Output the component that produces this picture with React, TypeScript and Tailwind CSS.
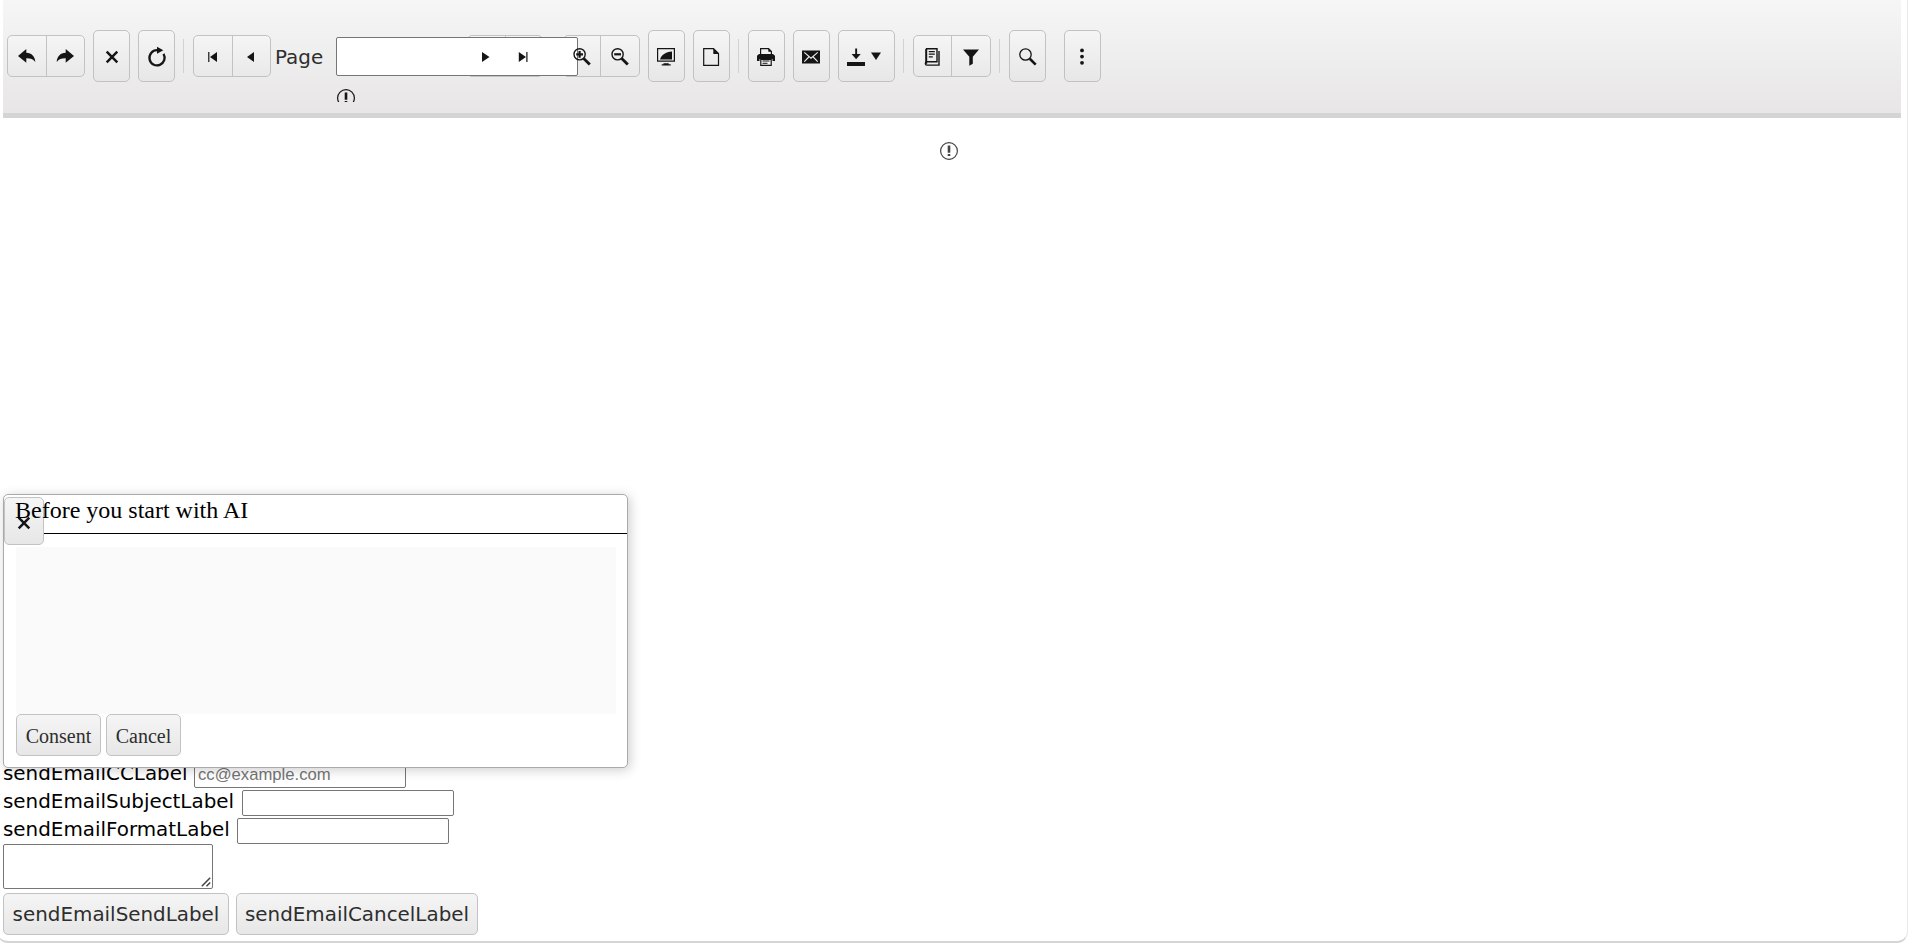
import React from "react";

const btn = "flex shrink-0 items-center justify-center rounded-[5px] border border-[#c2c2c2] bg-linear-to-b from-[#f5f5f5] to-[#e7e7e7] text-[#151515]";
const tall = "h-[52px] w-[37px]";
const group = "flex h-[42px] shrink-0 rounded-[5px] border border-[#c2c2c2] bg-linear-to-b from-[#f5f5f5] to-[#e9e9e9] text-[#151515]";
const cell = "flex flex-1 items-center justify-center";

function Icon({ children, className = "top-px" }: { children: React.ReactNode; className?: string }) {
  return (
    <svg viewBox="0 0 18 18" width="18" height="18" fill="currentColor" className={`relative shrink-0 overflow-visible ${className}`}>
      {children}
    </svg>
  );
}

function Cross() {
  return <path d="M3.7 3.7 14.3 14.3M14.3 3.7 3.7 14.3" fill="none" stroke="currentColor" strokeWidth="2.5" />;
}

function Alert({ className = "" }: { className?: string }) {
  return (
    <svg viewBox="0 0 18 18" width="18" height="18" className={`shrink-0 ${className}`}>
      <circle cx="9" cy="9" r="8.4" fill="none" stroke="currentColor" strokeWidth="1.2" />
      <path d="M7.7 3.6h2.6v7.1H7.700zM7.700 12h2.600v2H7.700z" fill="currentColor" />
    </svg>
  );
}

function Separator({ className = "" }: { className?: string }) {
  return <div className={`h-[34px] w-px shrink-0 bg-[#d2d2d2] ${className}`} />;
}

function Lens({ sign }: { sign: "plus" | "minus" }) {
  return (
    <>
      <circle cx="6.6" cy="6.3" r="5.6" fill="none" stroke="currentColor" strokeWidth="1.4" />
      <path d="m10.7 10.4 6.1 6.1" fill="none" stroke="currentColor" strokeWidth="2.8" />
      <path d={sign === "plus" ? "M3.2 6.3H10M6.6 2.9v6.8" : "M3.2 6.3H10"} fill="none" stroke="currentColor" strokeWidth="2.2" />
    </>
  );
}

function Toolbar() {
  return (
    <div className="ml-[3px] h-[118px] w-[1898px] border-b-[5px] border-[#d4d4d4] bg-linear-to-b from-[#f6f6f6] to-[#e8e6e7]">
      <div className="flex h-[112px] items-center pl-1">
        <div className={`${group} w-[78px]`}>
          <div className={`${cell} border-r border-[#c2c2c2]`}>
            <Icon className="left-[0.5px] top-px"><path d="M0 8 8.3 1v3.7C13.8 4.9 17 8.5 17.3 14c-2.1-2.9-4.8-3.9-9-3.8v4.5Z" /></Icon>
          </div>
          <div className={cell}>
            <Icon><path d="M18 8 9.700 1v3.700C4.200 4.900 1 8.500.700 14c2.100-2.900 4.800-3.900 9-3.800v4.500Z" /></Icon>
          </div>
        </div>
        <div className={`${btn} ${tall} ml-2`}><Icon className="left-[0.5px] top-px"><Cross /></Icon></div>
        <div className={`${btn} ${tall} ml-2`}>
          <Icon className="left-[0.5px] top-px">
            <path d="M10.500 2.200H9A7.600 7.600 0 1 0 15.500 5.800" fill="none" stroke="currentColor" strokeWidth="2.300" />
            <path d="M9-1.200 15.300 2.200 9 5.800Z" />
          </Icon>
        </div>
        <Separator className="ml-2" />
        <div className={`${group} ml-[9px] w-[78px]`}>
          <div className={`${cell} border-r border-[#c2c2c2]`}>
            <Icon><path d="M4.200 4h1.200v10H4.200zM6 9l7-5v10Z" /></Icon>
          </div>
          <div className={cell}><Icon><path d="m5 9 7-5v10Z" /></Icon></div>
        </div>
        <div className="mt-1 ml-1 w-[61px] shrink-0 font-['DejaVu_Sans',sans-serif] text-[19.9px] leading-6 text-[#2e2e2e]">Page</div>
        <div className="relative h-[39px] w-[131px] shrink-0">
          <input aria-label="Page" className="absolute left-0 top-0 z-10 h-[39px] w-[242px] rounded-[2px] border border-[#767676] bg-white px-1 outline-none" />
          <div className="absolute left-[1px] top-[52px] h-[13px] overflow-hidden"><Alert className="text-[#151515]" /></div>
        </div>
        <div className={`${group} w-[76px]`}>
          <div className={`${cell} border-r border-[#c2c2c2]`}><Icon className="top-px z-20"><path d="M5 4v10l7.500-5Z" /></Icon></div>
          <div className={cell}><Icon className="-left-[0.5px] top-px z-20"><path d="M4.800 4v10l7.200-5ZM12.300 4h1.200v10h-1.200z" /></Icon></div>
        </div>
        <div className={`${group} ml-5 w-[77px]`}>
          <div className="flex w-[37px] items-center justify-center border-r border-[#c2c2c2]"><Icon className="top-px z-20"><Lens sign="plus" /></Icon></div>
          <div className={cell}><Icon><Lens sign="minus" /></Icon></div>
        </div>
        <div className={`${btn} ${tall} ml-2`}>
          <Icon className="-left-[0.5px] top-px">
            <path d="M.6.600h16.800v12.600H.6Z" fill="none" stroke="currentColor" strokeWidth="1.200" />
            <path d="M3 11.400C4.500 7 8.500 3.900 15 3.500v7.900ZM6.500 15.200h5.200v1h2v1.300h-9v-1.300h1.800Z" />
          </Icon>
        </div>
        <div className={`${btn} ${tall} ml-2`}>
          <Icon className="-left-[0.5px] top-px">
            <path d="M1.700.700h9.800l5 4.900v11.700H1.700Z" fill="none" stroke="currentColor" strokeWidth="1.200" />
            <path d="M11.300.400 16.800 6h-5.500Z" />
          </Icon>
        </div>
        <Separator className="ml-2" />
        <div className={`${btn} ${tall} ml-[9px]`}>
          <Icon className="-left-[0.5px] top-px">
            <path d="M3.600 6V.700h8l2.800 2.700V6" fill="#f3f3f3" stroke="currentColor" strokeWidth="1.200" />
            <path d="M11.300.300v3.400h3.600ZM2 6h14l2 1.800v5.200h-2.500v-2h-13v2H0V7.800Z" />
            <path d="M3.800 11.300v6h10.400v-6Z" fill="#f3f3f3" stroke="currentColor" strokeWidth="1.200" />
            <path d="M5.500 13h7M5.500 15.300h5" stroke="currentColor" strokeWidth="1" />
          </Icon>
        </div>
        <div className={`${btn} ${tall} ml-2`}>
          <Icon className="-left-[0.5px] top-px">
            <path d="M0 2.500h18v13H0Z" />
            <path d="m2.300 4.300 6.700 5.900 6.700-5.900M2.300 13.700 6.800 9M15.700 13.700 11.200 9" fill="none" stroke="#eee" strokeWidth="1.100" />
          </Icon>
        </div>
        <div className={`${btn} ml-2 h-[52px] w-[57px] gap-[6px] pr-[5px]`}>
          <Icon><path d="M8.200.500h1.900V6h3.600L9.100 11.300 4.600 6h3.600ZM0 14.100h18V18H0Z" /></Icon>
          <svg viewBox="0 0 10 8" width="10" height="8" fill="currentColor"><path d="M0 .500h10L5 8Z" /></svg>
        </div>
        <Separator className="ml-2" />
        <div className={`${group} ml-[9px] w-[78px]`}>
          <div className="flex w-[38px] items-center justify-center border-r border-[#c2c2c2]">
            <Icon className="-left-[0.5px] top-px">
              <path d="M3 .800h11v13h-10a1.500 1.500 0 0 0 0 3.300h12V3" fill="none" stroke="currentColor" strokeWidth="1.400" />
              <path d="M2.200.800h2v15h-2z" />
              <path d="M5.800 3.600h6M5.800 6.200h6M5.800 8.800h4" stroke="currentColor" strokeWidth="1.200" />
            </Icon>
          </div>
          <div className={cell}><Icon><path d="M1 1.500h16l-6.200 7.300v6.900l-3.500 2V8.800Z" /></Icon></div>
        </div>
        <Separator className="ml-2" />
        <div className={`${btn} ${tall} ml-[9px]`}>
          <Icon className="left-[0.5px] top-px">
            <circle cx="6.500" cy="6.500" r="5.700" fill="none" stroke="currentColor" strokeWidth="1.300" />
            <path d="m10.800 10.800 5.900 5.800" fill="none" stroke="currentColor" strokeWidth="2.600" />
          </Icon>
        </div>
        <div className={`${btn} ${tall} ml-[18px]`}>
          <Icon className="-left-[0.5px] top-px"><circle cx="9" cy="2.400" r="1.900" /><circle cx="9" cy="8.600" r="1.900" /><circle cx="9" cy="14.800" r="1.900" /></Icon>
        </div>
      </div>
    </div>
  );
}

function ConsentDialog() {
  return (
    <section className="absolute left-[3px] top-[494px] h-[274px] w-[625px] rounded-[5px] border border-[#aaa] bg-white font-['Liberation_Serif',serif] shadow-[2px_2px_12px_rgba(0,0,0,0.2)]">
      <div className={`${btn} absolute left-0 top-[2px] h-[48px] w-[40px]`}><Icon className="top-[2px]"><Cross /></Icon></div>
      <h2 className="relative h-[38px] pl-[11px] pt-px text-[24px] leading-7 text-black">Before you start with AI</h2>
      <div className="ml-10 h-px bg-black" />
      <div className="ml-3 mt-[13px] h-[167px] w-[600px] bg-[#fafafa]" />
      <div className="ml-3 flex gap-[5px] text-[20px] text-[#2e2e2e]">
        <button className={`${btn} h-[42px] w-[85px] pt-0.5 !text-[#2e2e2e]`}>Consent</button>
        <button className={`${btn} h-[42px] w-[75px] pt-0.5 !text-[#2e2e2e]`}>Cancel</button>
      </div>
    </section>
  );
}

const field = "mt-[3px] h-[26px] w-[212px] rounded-[2px] border border-[#767676] bg-white px-[3px] font-['Liberation_Sans',sans-serif] text-[16.667px] outline-none placeholder:text-[#757575]";

function EmailForm() {
  return (
    <form className="ml-[3px] mt-[599px] font-['DejaVu_Sans',sans-serif] text-[19.9px] leading-6 text-black">
      <div className="flex h-7 items-center"><label className="mt-[2px] w-[191px]">sendEmailCCLabel</label><input className={field} placeholder="cc@example.com" /></div>
      <div className="flex h-7 items-center"><label className="mt-[2px] w-[239px]">sendEmailSubjectLabel</label><input className={field} /></div>
      <div className="flex h-7 items-center"><label className="mt-[2px] w-[234px]">sendEmailFormatLabel</label><input className={field} /></div>
      <div className="relative mt-px h-[45px] w-[210px]">
        <textarea className="block h-full w-full resize-none rounded-[2px] border border-[#767676] bg-white" />
        <svg viewBox="0 0 10 10" width="10" height="10" className="absolute bottom-[2px] right-[2px] text-[#444]">
          <path d="M.8 9.200 9.200.800M5.500 9.200 9.200 5.500" fill="none" stroke="currentColor" strokeWidth="1.500" />
        </svg>
      </div>
      <div className="mt-1 flex gap-[7px]">
        <button type="button" className={`${btn} h-[42px] w-[226px] pt-0.5 !text-[#2e2e2e]`}>sendEmailSendLabel</button>
        <button type="button" className={`${btn} h-[42px] w-[242px] pt-0.5 !text-[#2e2e2e]`}>sendEmailCancelLabel</button>
      </div>
    </form>
  );
}

export default function App() {
  return (
    <main className="h-[945px] w-[1917px] overflow-hidden bg-white">
      <div className="relative -ml-[3px] h-[943px] w-[1911px] rounded-b-[11px] border-b-2 border-r border-b-[#d5d5d5] border-r-[#e9e9e9] pl-[3px]">
        <Toolbar />
        <div className="ml-[3px] flex h-[42px] w-[1892px] items-end justify-center text-[#444]"><Alert /></div>
        <EmailForm />
        <div className="absolute left-[3px] top-0"><ConsentDialog /></div>
      </div>
    </main>
  );
}
